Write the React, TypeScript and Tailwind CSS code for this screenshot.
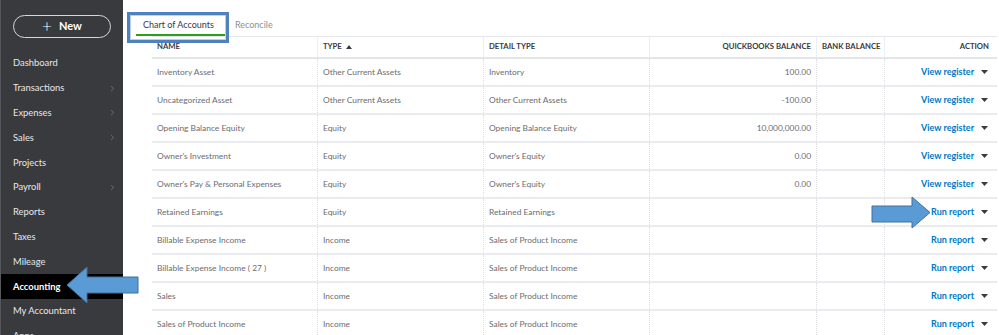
import { ChevronRight } from "lucide-react";

const navItems = [
  { name: "Dashboard", arrow: false },
  { name: "Transactions", arrow: true },
  { name: "Expenses", arrow: true },
  { name: "Sales", arrow: true },
  { name: "Projects", arrow: false },
  { name: "Payroll", arrow: true },
  { name: "Reports", arrow: false },
  { name: "Taxes", arrow: false },
  { name: "Mileage", arrow: false },
  { name: "Accounting", arrow: false, active: true },
  { name: "My Accountant", arrow: false },
  { name: "Apps", arrow: false },
];

const rows = [
  { name: "Inventory Asset", type: "Other Current Assets", detail: "Inventory", qb: "100.00", action: "View register" },
  { name: "Uncategorized Asset", type: "Other Current Assets", detail: "Other Current Assets", qb: "-100.00", action: "View register" },
  { name: "Opening Balance Equity", type: "Equity", detail: "Opening Balance Equity", qb: "10,000,000.00", action: "View register" },
  { name: "Owner's Investment", type: "Equity", detail: "Owner's Equity", qb: "0.00", action: "View register" },
  { name: "Owner's Pay & Personal Expenses", type: "Equity", detail: "Owner's Equity", qb: "0.00", action: "View register" },
  { name: "Retained Earnings", type: "Equity", detail: "Retained Earnings", qb: "", action: "Run report" },
  { name: "Billable Expense Income", type: "Income", detail: "Sales of Product Income", qb: "", action: "Run report" },
  { name: "Billable Expense Income ( 27 )", type: "Income", detail: "Sales of Product Income", qb: "", action: "Run report" },
  { name: "Sales", type: "Income", detail: "Sales of Product Income", qb: "", action: "Run report" },
  { name: "Sales of Product Income", type: "Income", detail: "Sales of Product Income", qb: "", action: "Run report" },
];

const cols = "grid grid-cols-[166px_166px_166px_167px_68px_112px]";

const Caret = () => (
  <svg width="7" height="4" viewBox="0 0 7 4" className="ml-[7px]">
    <path d="M0 0 L7 0 L3.5 4 Z" fill="#393a3d" />
  </svg>
);

const Sidebar = () => (
  <div className="w-[123px] shrink-0 bg-[#393a3d] h-[335px] overflow-hidden border-l border-[#55565a]">
    <div className="pt-[15px] px-[12px]">
      <div className="h-[23px] w-[98px] rounded-full border-[1.5px] border-[#d4d7dc] flex items-center justify-center gap-[7px] text-white">
        <span className="text-[17px] leading-none font-light -mt-[2px]">+</span>
        <span className="text-[11px] font-bold">New</span>
      </div>
    </div>
    <div className="mt-[13px] flex flex-col">
      {navItems.map((item) => (
        <div
          key={item.name}
          className={`h-[24.8px] flex items-center justify-between pl-[12px] pr-[6px] text-[9.4px] ${
            item.active ? "bg-black text-white font-bold" : "text-[#e6e7e9]"
          }`}
        >
          <span>{item.name}</span>
          {item.arrow && <ChevronRight size={9} color="#8d9096" strokeWidth={1.5} />}
        </div>
      ))}
    </div>
  </div>
);

const App = () => {
  return (
    <div className="relative w-[999px] h-[335px] overflow-hidden bg-white flex font-['Lato','Open_Sans',sans-serif]">
      <Sidebar />
      <div className="flex-1 pl-[20px] pr-[2px]">
        <div className="h-[36px] flex items-end text-[9px]">
          <div className="pb-[5px] text-[#393a3d]">Chart of Accounts</div>
          <div className="pl-[21px] pb-[5px] text-[#8d9096]">Reconcile</div>
        </div>
        <div className="ml-[9px] border-t border-[#e3e5e8]">
          <div className={`${cols} h-[22px] border-b-2 border-[#e3e5e8] text-[7.7px] font-bold text-[#393a3d] whitespace-nowrap`}>
            <div className="flex items-center pl-[5px] border-r border-[#eceef1]">NAME</div>
            <div className="flex items-center pl-[5px] border-r border-[#eceef1] gap-[4px]">
              TYPE
              <svg width="6" height="4" viewBox="0 0 6 4">
                <path d="M0 4 L6 4 L3 0 Z" fill="#393a3d" />
              </svg>
            </div>
            <div className="flex items-center pl-[5px] border-r border-[#eceef1]">DETAIL TYPE</div>
            <div className="flex items-center justify-end pr-[5px] border-r border-[#eceef1]">QUICKBOOKS BALANCE</div>
            <div className="flex items-center pl-[5px] border-r border-[#eceef1]">BANK BALANCE</div>
            <div className="flex items-center justify-end pr-[8px]">ACTION</div>
          </div>
          {rows.map((r) => (
            <div key={r.name} className={`${cols} h-[28px] border-b-2 border-[#e9ebee] text-[8.4px] text-[#6b6c72] whitespace-nowrap`}>
              <div className="flex items-center pl-[5px] border-r border-dotted border-[#dcdee2]">{r.name}</div>
              <div className="flex items-center pl-[5px] border-r border-dotted border-[#dcdee2]">{r.type}</div>
              <div className="flex items-center pl-[5px] border-r border-dotted border-[#dcdee2]">{r.detail}</div>
              <div className="flex items-center justify-end pr-[5px] border-r border-dotted border-[#dcdee2]">{r.qb}</div>
              <div className="border-r border-dotted border-[#dcdee2]" />
              <div className="flex items-center justify-end pr-[9px] text-[#0077c5] font-bold text-[9px]">
                {r.action}
                <Caret />
              </div>
            </div>
          ))}
        </div>
      </div>

      {/* annotation: tab highlight */}
      <div className="absolute left-[127px] top-[12px] w-[102px] h-[31px] border-[3px] border-[#4f81bd] pointer-events-none">
        <div className="w-full h-full border border-[#bcd0e8]" />
        <div className="absolute left-[6px] top-[19px] w-[89px] h-[2px] bg-[#2ca01c]" />
      </div>

      {/* annotation: arrow to Accounting */}
      <svg className="absolute left-[60px] top-[262px]" width="82" height="46" viewBox="60 262 82 46">
        <path d="M67 285 L87 267 L87 277 L138 277 L138 293 L87 293 L87 303 Z" fill="#5b9bd5" stroke="#41719c" strokeWidth="1" />
      </svg>

      {/* annotation: arrow to Run report */}
      <svg className="absolute left-[868px] top-[194px]" width="66" height="37" viewBox="868 194 66 37">
        <path d="M930 212.5 L912 197 L912 206 L872 206 L872 222 L912 222 L912 228 Z" fill="#5b9bd5" stroke="#41719c" strokeWidth="1" />
      </svg>
    </div>
  );
};

export default App;
